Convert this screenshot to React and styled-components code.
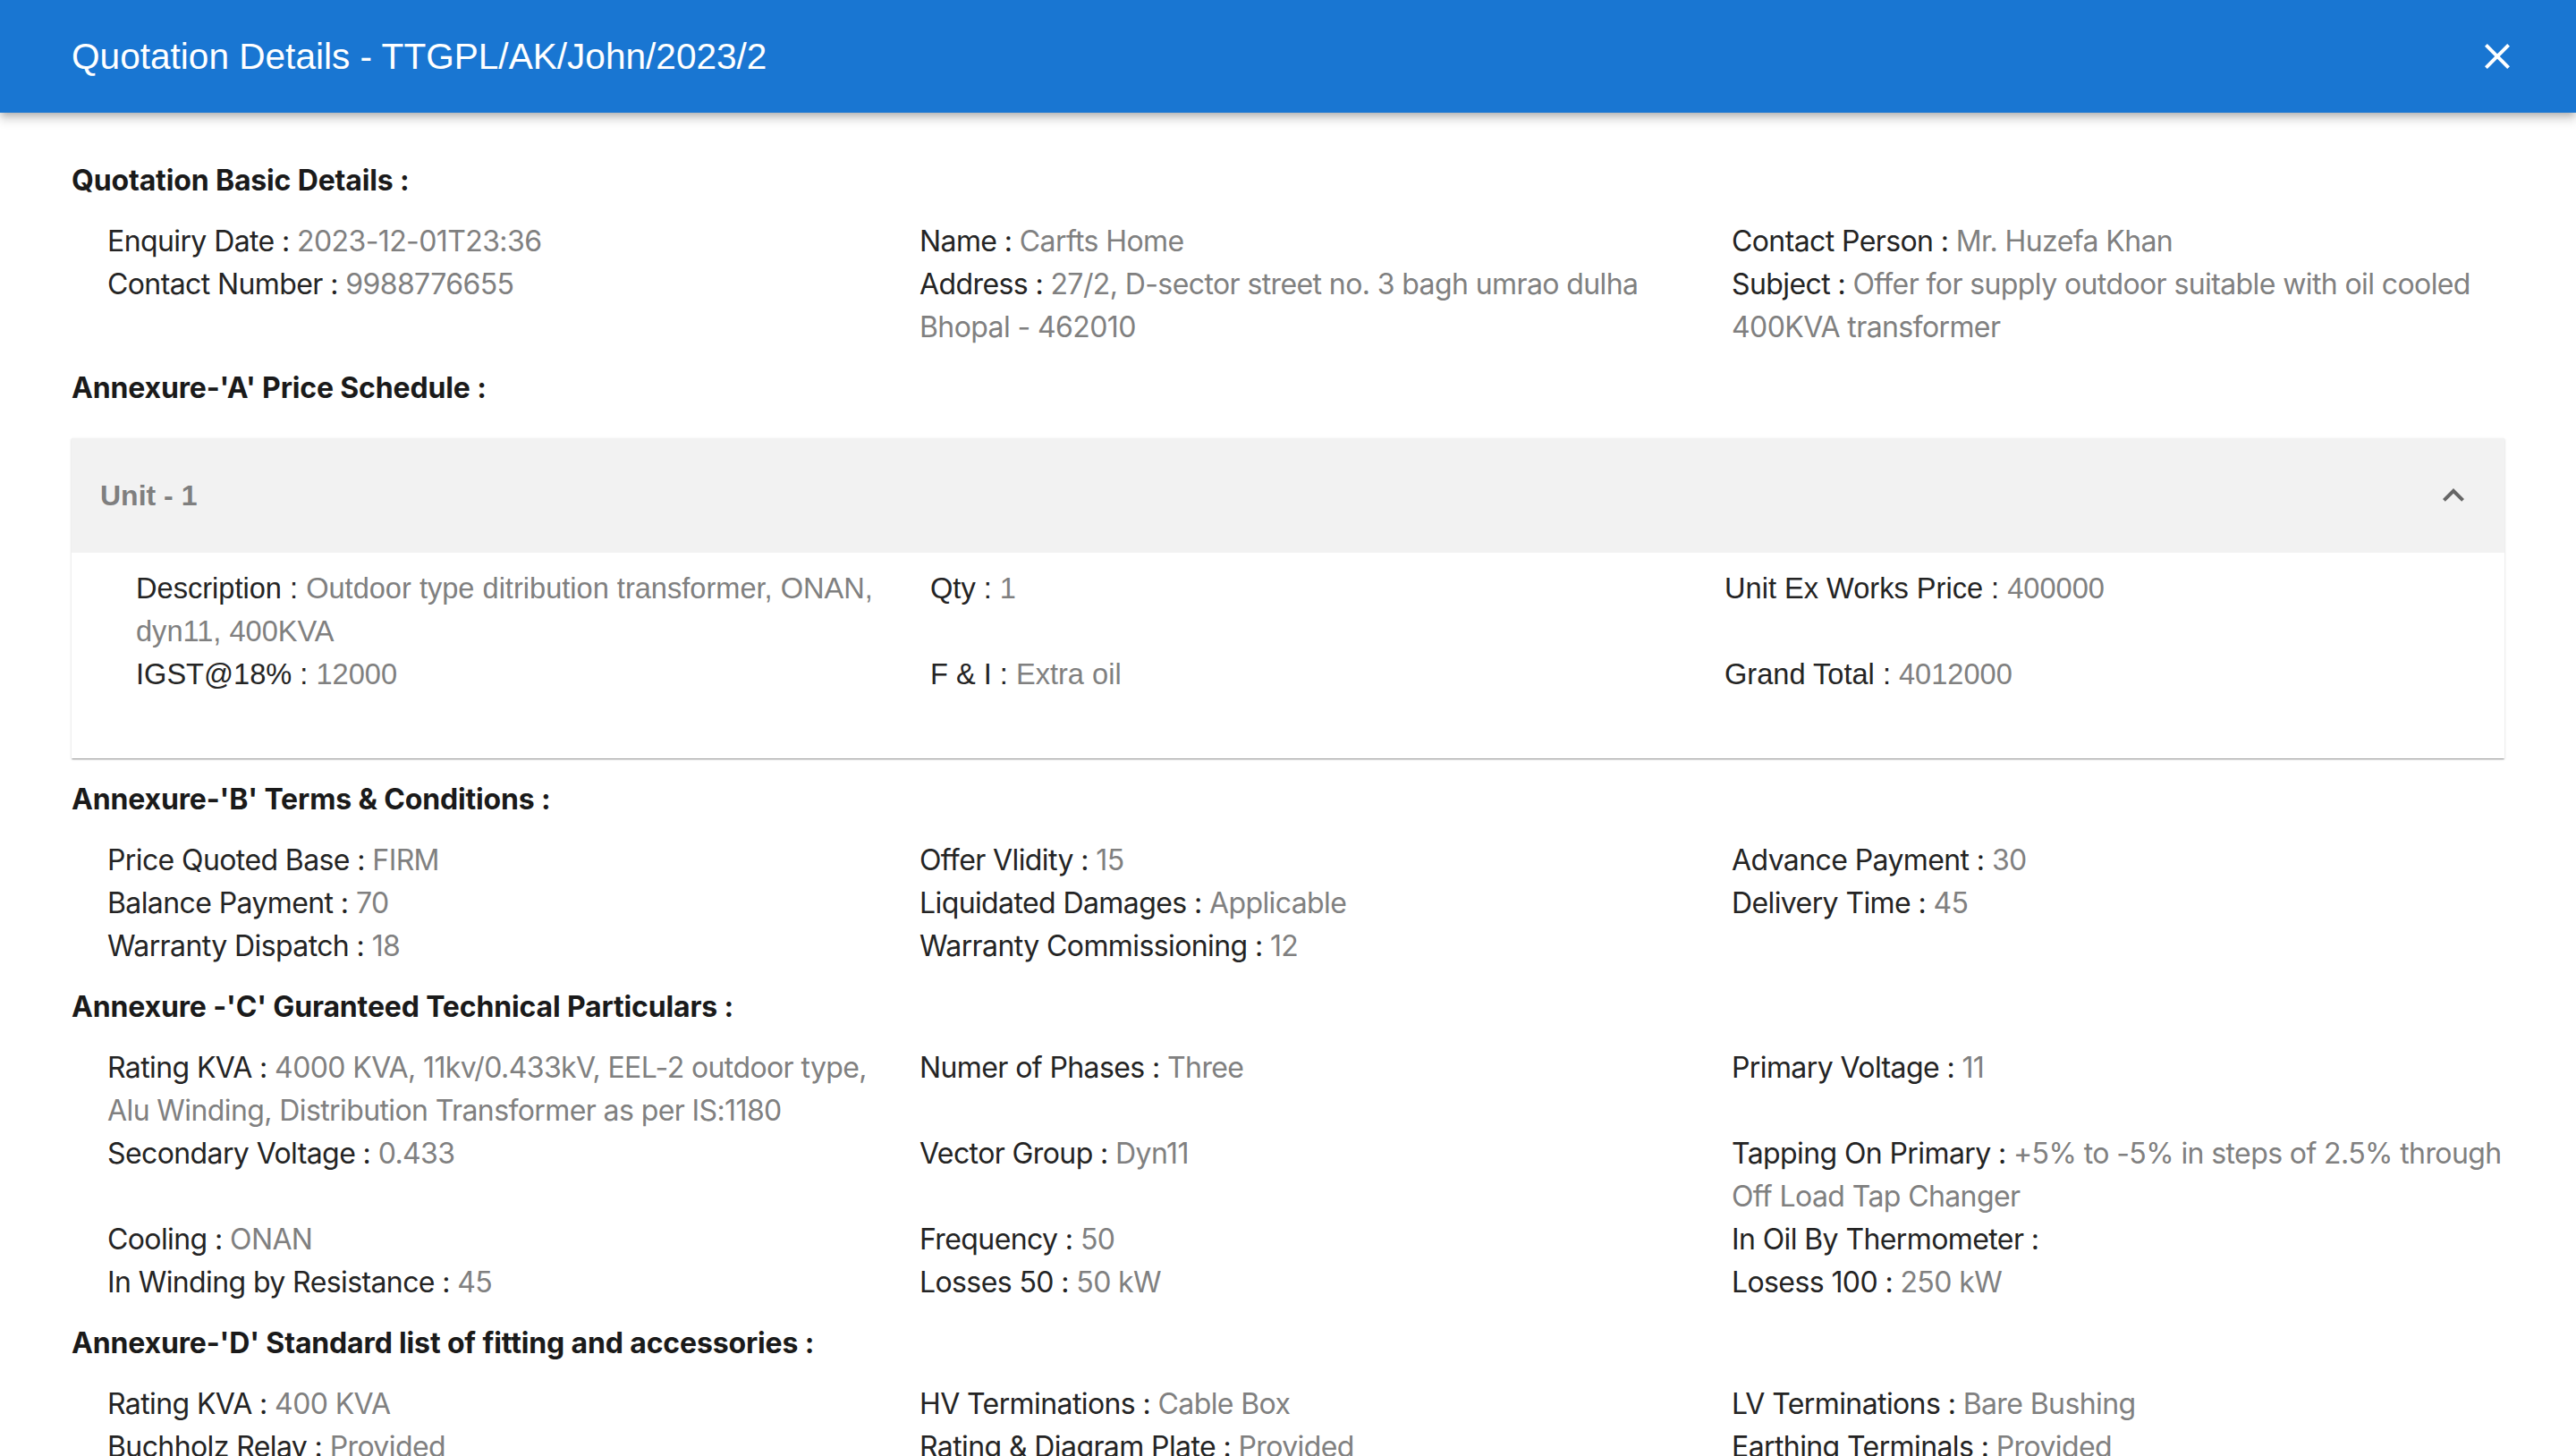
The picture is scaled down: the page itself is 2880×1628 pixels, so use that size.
import React from "react";
import styled, { createGlobalStyle } from "styled-components";

const GlobalStyle = createGlobalStyle`
  html, body { margin: 0; padding: 0; background: #ffffff; }
  body { font-family: Inter, "Noto Sans", sans-serif; }
  * { box-sizing: border-box; }
`;

const Page = styled.div`
  width: 2880px;
  min-height: 1628px;
  background: #fff;
`;

const TopBar = styled.header`
  height: 126px;
  background: #1976d2;
  color: #fff;
  display: flex;
  align-items: center;
  justify-content: space-between;
  padding: 0 60px 0 80px;
  box-shadow: 0 4px 8px -2px rgba(0, 0, 0, 0.25), 0 8px 10px 1px rgba(0, 0, 0, 0.12);
  position: relative;
  z-index: 2;
`;

const Title = styled.h1`
  margin: 0;
  font-family: "Liberation Sans", Arial, sans-serif;
  font-weight: 400;
  font-size: 40.6px;
`;

const CloseButton = styled.button`
  width: 56px;
  height: 56px;
  border: 0;
  background: transparent;
  display: flex;
  align-items: center;
  justify-content: center;
  padding: 0;
  cursor: pointer;
`;

const Content = styled.main`
  padding: 52px 80px 40px;
  display: flex;
  flex-direction: column;
`;

const Heading = styled.h2`
  margin: 0;
  font-size: 32px;
  line-height: 48px;
  font-weight: 700;
  color: #1a1a1a;
  letter-spacing: -0.15px;
`;

const Fields = styled.div`
  display: grid;
  grid-template-columns: repeat(3, 1fr);
  column-gap: 38px;
  align-items: start;
  padding: 0 0 0 40px;
  margin: 20px -6px 20px 0;
`;

const Field = styled.div`
  font-family: ${(p) => (p.$helv ? `"Liberation Sans", Arial, sans-serif` : `Inter, sans-serif`)};
  font-size: ${(p) => (p.$helv ? "32.6px" : "32px")};
  line-height: 48px;
  color: #242424;
  letter-spacing: ${(p) => (p.$helv ? "0" : "-0.6px")};
`;

const Value = styled.span`
  color: #808080;
`;

const Accordion = styled.section`
  margin: 32px 0 22px;
  background: #fff;
  box-shadow: 0 2px 1px -1px rgba(0, 0, 0, 0.2), 0 1px 1px 0 rgba(0, 0, 0, 0.14),
    0 1px 3px 0 rgba(0, 0, 0, 0.12);
`;

const AccordionHead = styled.div`
  height: 128px;
  background: #f2f2f2;
  display: flex;
  align-items: center;
  justify-content: space-between;
  padding: 0 33px 0 32px;
`;

const UnitTitle = styled.span`
  font-family: "Liberation Sans", Arial, sans-serif;
  font-weight: 700;
  font-size: 32px;
  color: #7f7f7f;
`;

const AccordionBody = styled(Fields)`
  margin: 0;
  column-gap: 48px;
  padding: 16px 32px 70px 72px;
`;

const Row = ({ label, value, helv }) => (
  <Field $helv={helv}>
    {label} : {value !== undefined && value !== "" && <Value>{value}</Value>}
  </Field>
);

const basic = [
  ["Enquiry Date", "2023-12-01T23:36"],
  ["Name", "Carfts Home"],
  ["Contact Person", "Mr. Huzefa Khan"],
  ["Contact Number", "9988776655"],
  ["Address", "27/2, D-sector street no. 3 bagh umrao dulha Bhopal - 462010"],
  ["Subject", "Offer for supply outdoor suitable with oil cooled 400KVA transformer"],
];

const unit = [
  ["Description", "Outdoor type ditribution transformer, ONAN, dyn11, 400KVA"],
  ["Qty", "1"],
  ["Unit Ex Works Price", "400000"],
  ["IGST@18%", "12000"],
  ["F & I", "Extra oil"],
  ["Grand Total", "4012000"],
];

const terms = [
  ["Price Quoted Base", "FIRM"],
  ["Offer Vlidity", "15"],
  ["Advance Payment", "30"],
  ["Balance Payment", "70"],
  ["Liquidated Damages", "Applicable"],
  ["Delivery Time", "45"],
  ["Warranty Dispatch", "18"],
  ["Warranty Commissioning", "12"],
];

const technical = [
  ["Rating KVA", "4000 KVA, 11kv/0.433kV, EEL-2 outdoor type, Alu Winding, Distribution Transformer as per IS:1180"],
  ["Numer of Phases", "Three"],
  ["Primary Voltage", "11"],
  ["Secondary Voltage", "0.433"],
  ["Vector Group", "Dyn11"],
  ["Tapping On Primary", "+5% to -5% in steps of 2.5% through Off Load Tap Changer"],
  ["Cooling", "ONAN"],
  ["Frequency", "50"],
  ["In Oil By Thermometer", ""],
  ["In Winding by Resistance", "45"],
  ["Losses 50", "50 kW"],
  ["Losess 100", "250 kW"],
];

const fittings = [
  ["Rating KVA", "400 KVA"],
  ["HV Terminations", "Cable Box"],
  ["LV Terminations", "Bare Bushing"],
  ["Buchholz Relay", "Provided"],
  ["Rating & Diagram Plate", "Provided"],
  ["Earthing Terminals", "Provided"],
];

const FieldGrid = ({ items }) => (
  <Fields>
    {items.map(([l, v]) => (
      <Row key={l} label={l} value={v} />
    ))}
  </Fields>
);

export default function App() {
  return (
    <Page>
      <GlobalStyle />
      <TopBar>
        <Title>Quotation Details - TTGPL/AK/John/2023/2</Title>
        <CloseButton aria-label="close">
          <svg width="48" height="48" viewBox="0 0 24 24" fill="#fff">
            <path d="M19 6.41L17.59 5 12 10.59 6.41 5 5 6.41 10.59 12 5 17.59 6.41 19 12 13.41 17.59 19 19 17.59 13.41 12z" />
          </svg>
        </CloseButton>
      </TopBar>
      <Content>
        <Heading>Quotation Basic Details :</Heading>
        <FieldGrid items={basic} />

        <Heading>Annexure-'A' Price Schedule :</Heading>
        <Accordion>
          <AccordionHead>
            <UnitTitle>Unit - 1</UnitTitle>
            <svg width="48" height="48" viewBox="0 0 24 24" fill="#666">
              <path d="M12 8l-6 6 1.41 1.41L12 10.83l4.59 4.58L18 14z" />
            </svg>
          </AccordionHead>
          <AccordionBody>
            {unit.map(([l, v]) => (
              <Row key={l} label={l} value={v} helv />
            ))}
          </AccordionBody>
        </Accordion>

        <Heading>Annexure-'B' Terms &amp; Conditions :</Heading>
        <FieldGrid items={terms} />

        <Heading>Annexure -'C' Guranteed Technical Particulars :</Heading>
        <FieldGrid items={technical} />

        <Heading>Annexure-'D' Standard list of fitting and accessories :</Heading>
        <FieldGrid items={fittings} />
      </Content>
    </Page>
  );
}
